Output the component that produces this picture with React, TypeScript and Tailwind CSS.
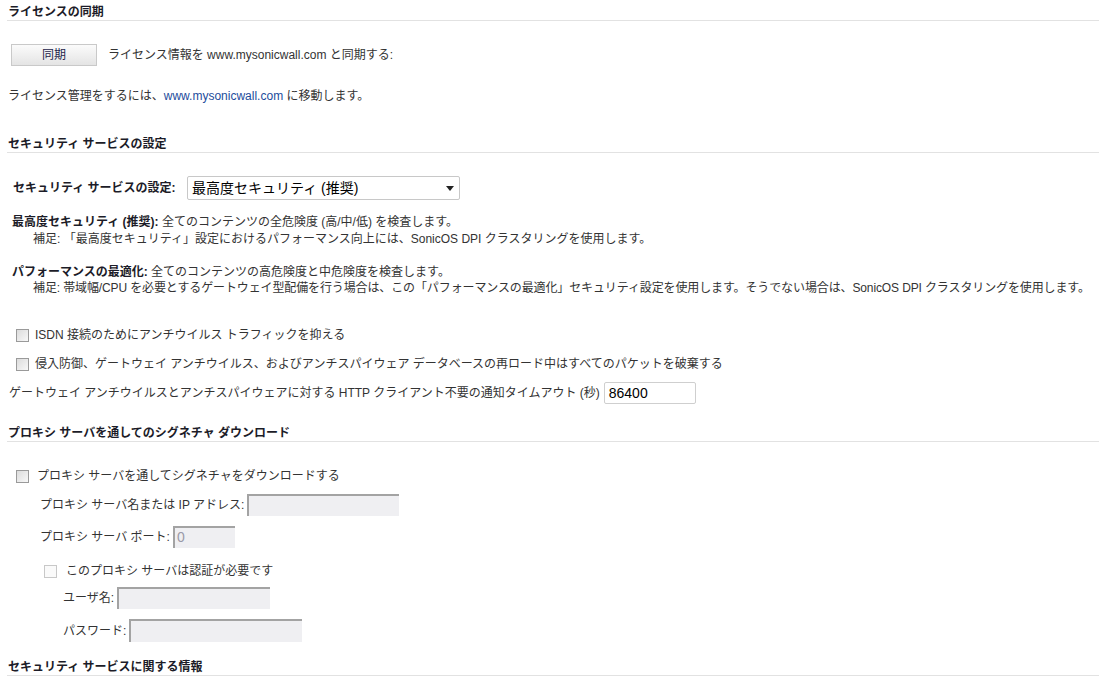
import React from 'react';

const font = { fontFamily: '"Liberation Sans", "Noto Sans CJK JP", sans-serif' };

function Heading({ children, className = '' }: { children: React.ReactNode; className?: string }) {
  return (
    <div className={`h-[17px] border-b border-[#e2e2e2] pl-[1px] text-[12px] font-bold leading-[16px] text-[#1c1c28] ${className}`}>
      {children}
    </div>
  );
}

function Checkbox({ disabled = false }: { disabled?: boolean }) {
  return (
    <span
      className={`inline-block h-[13px] w-[13px] shrink-0 border ${
        disabled
          ? 'border-[#c8c8c8] bg-[#fafafa]'
          : 'border-[#9a9a9a] bg-gradient-to-br from-[#dcdcdc] to-[#f8f8f8]'
      }`}
    />
  );
}

function GrayInput({ className = '', value = '' }: { className?: string; value?: string }) {
  return (
    <div
      className={`h-[22px] border-l-2 border-t-2 border-[#a3a3a3] bg-[#efeff2] pl-[2px] text-[14px] leading-[19px] text-[#9a9aa8] ${className}`}
    >
      {value}
    </div>
  );
}

export default function App() {
  return (
    <div className="min-h-[683px] w-[1105px] bg-white pl-[7px] pr-[6px] text-[12px] text-[#333]" style={font}>
      {/* ライセンスの同期 */}
      <Heading className="mt-[4px]">ライセンスの同期</Heading>

      <div className="mt-[23px] flex h-[22px] items-center">
        <button className="ml-[4px] h-[22px] w-[86px] border border-[#c9c9c9] bg-gradient-to-b from-[#fbfbfb] to-[#e4e4e4] text-[12px] text-[#23234a]">
          同期
        </button>
        <span className="ml-[11px] leading-[16px]">ライセンス情報を www.mysonicwall.com と同期する:</span>
      </div>

      <div className="mt-[22px] pl-[1px] leading-[16px]">
        ライセンス管理をするには、<span className="text-[#1d4c9c]">www.mysonicwall.com</span> に移動します。
      </div>

      {/* セキュリティ サービスの設定 */}
      <Heading className="mt-[32px]">セキュリティ サービスの設定</Heading>

      <div className="mt-[23px] flex h-[24px] items-center">
        <span className="ml-[6px] w-[174px] font-bold text-[#1c1c28]">セキュリティ サービスの設定:</span>
        <div className="flex h-[24px] w-[273px] items-center justify-between rounded-[2px] border border-[#c8c8c8] bg-white pl-[4px] pr-[5px] text-[14px] text-black">
          <span>最高度セキュリティ (推奨)</span>
          <svg width="8" height="5" viewBox="0 0 8 5">
            <path d="M0 0h8L4 5z" fill="#222" />
          </svg>
        </div>
      </div>

      <div className="mt-[14px] pl-[5px] leading-[17px]">
        <div>
          <span className="font-bold text-[#1c1c28]">最高度セキュリティ (推奨):</span> 全てのコンテンツの全危険度 (高/中/低) を検査します。
        </div>
        <div className="pl-[21px]">補足: 「最高度セキュリティ」設定におけるパフォーマンス向上には、SonicOS DPI クラスタリングを使用します。</div>
      </div>

      <div className="mt-[16px] pl-[5px] leading-[16px]">
        <div>
          <span className="font-bold text-[#1c1c28]">パフォーマンスの最適化:</span> 全てのコンテンツの高危険度と中危険度を検査します。
        </div>
        <div className="whitespace-nowrap pl-[21px] tracking-[-0.12px]">
          補足: 帯域幅/CPU を必要とするゲートウェイ型配備を行う場合は、この「パフォーマンスの最適化」セキュリティ設定を使用します。そうでない場合は、SonicOS DPI クラスタリングを使用します。
        </div>
      </div>

      <div className="mt-[31px] flex h-[16px] items-center pl-[9px]">
        <Checkbox />
        <span className="ml-[6px]">ISDN 接続のためにアンチウイルス トラフィックを抑える</span>
      </div>

      <div className="mt-[13px] flex h-[16px] items-center pl-[9px]">
        <Checkbox />
        <span className="ml-[6px]">侵入防御、ゲートウェイ アンチウイルス、およびアンチスパイウェア データベースの再ロード中はすべてのパケットを破棄する</span>
      </div>

      <div className="mt-[10px] flex h-[22px] items-center pl-[2px]">
        <span>ゲートウェイ アンチウイルスとアンチスパイウェアに対する HTTP クライアント不要の通知タイムアウト (秒)</span>
        <div className="ml-[4px] h-[22px] w-[92px] rounded-[2px] border border-[#cfcfcf] bg-white pl-[4px] text-[14px] leading-[20px] text-black">
          86400
        </div>
      </div>

      {/* プロキシ */}
      <Heading className="mt-[21px]">プロキシ サーバを通してのシグネチャ ダウンロード</Heading>

      <div className="mt-[26px] flex h-[16px] items-center pl-[9px]">
        <Checkbox />
        <span className="ml-[8px]">プロキシ サーバを通してシグネチャをダウンロードする</span>
      </div>

      <div className="mt-[10px] flex h-[22px] items-center pl-[33px]">
        <span>プロキシ サーバ名または IP アドレス:</span>
        <GrayInput className="ml-[3px] w-[152px]" />
      </div>

      <div className="mt-[10px] flex h-[22px] items-center pl-[33px]">
        <span>プロキシ サーバ ポート:</span>
        <GrayInput className="ml-[3px] w-[62px]" value="0" />
      </div>

      <div className="mt-[15px] flex h-[16px] items-center pl-[37px]">
        <Checkbox disabled />
        <span className="ml-[9px]">このプロキシ サーバは認証が必要です</span>
      </div>

      <div className="mt-[8px] flex h-[22px] items-center pl-[56px]">
        <span>ユーザ名:</span>
        <GrayInput className="ml-[3px] w-[153px]" />
      </div>

      <div className="mt-[10px] flex h-[23px] items-center pl-[56px]">
        <span>パスワード:</span>
        <GrayInput className="ml-[3px] h-[23px] w-[173px]" />
      </div>

      <Heading className="mt-[17px]">セキュリティ サービスに関する情報</Heading>
    </div>
  );
}
